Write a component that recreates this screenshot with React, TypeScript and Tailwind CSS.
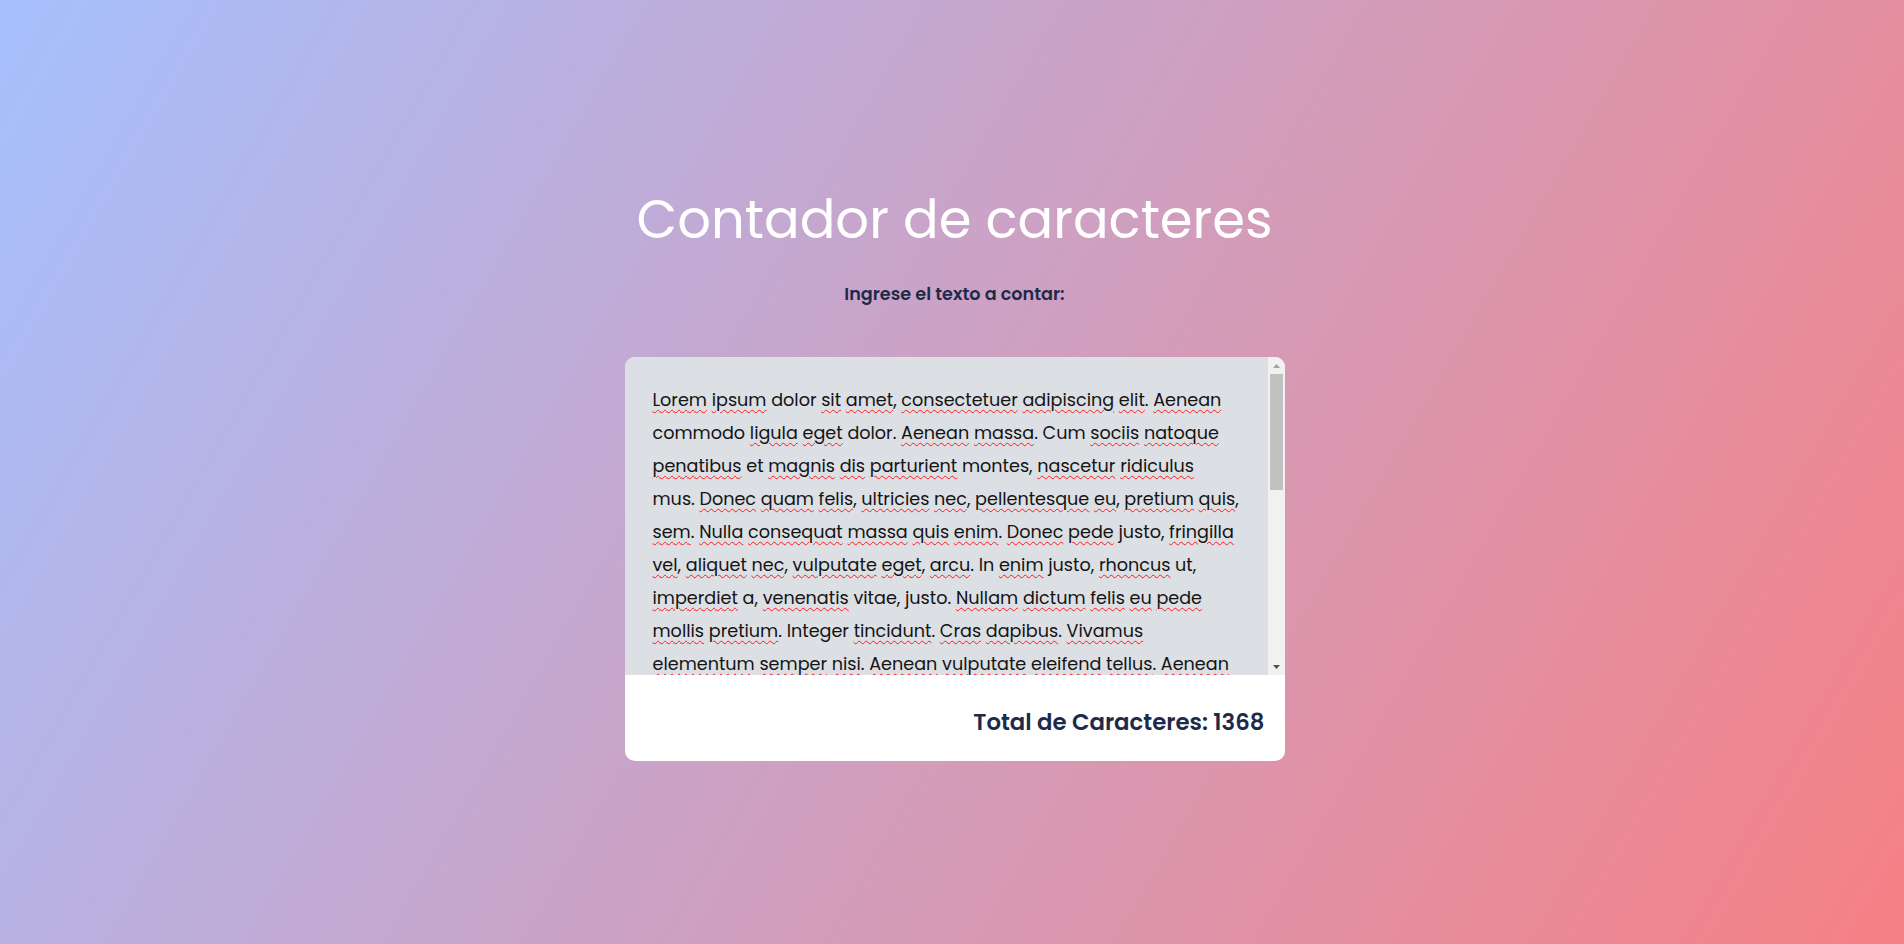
import React from "react";

const TEXT =
  "Lorem ipsum dolor sit amet, consectetuer adipiscing elit. Aenean commodo ligula eget dolor. Aenean massa. Cum sociis natoque penatibus et magnis dis parturient montes, nascetur ridiculus mus. Donec quam felis, ultricies nec, pellentesque eu, pretium quis, sem. Nulla consequat massa quis enim. Donec pede justo, fringilla vel, aliquet nec, vulputate eget, arcu. In enim justo, rhoncus ut, imperdiet a, venenatis vitae, justo. Nullam dictum felis eu pede mollis pretium. Integer tincidunt. Cras dapibus. Vivamus elementum semper nisi. Aenean vulputate eleifend tellus. Aenean leo ligula, porttitor eu, consequat vitae, eleifend ac, enim. Aliquam lorem ante, dapibus in, viverra quis, feugiat a, tellus. Phasellus viverra nulla ut metus varius laoreet. Quisque rutrum. Aenean imperdiet. Etiam ultricies nisi vel augue. Curabitur ullamcorper ultricies nisi. Nam eget dui. Etiam rhoncus. Maecenas tempus, tellus eget condimentum rhoncus, sem quam semper libero, sit amet adipiscing sem neque sed ipsum. Nam quam nunc, blandit vel, luctus pulvinar, hendrerit id, lorem. Maecenas nec odio et ante tincidunt tempus. Donec vitae sapien ut libero venenatis faucibus. Nullam quis ante. Etiam sit amet orci eget eros faucibus tincidunt. Duis leo. Sed fringilla mauris sit amet nibh. Donec sodales sagittis magna. Sed consequat, leo eget bibendum sodales, augue velit cursus nunc, quis gravida magna mi a libero. Fusce vulputate eleifend sapien. Vestibulum purus quam, scelerisque ut, mollis sed, nonummy id, metus. Nullam accumsan lorem in dui.";

// words the spell checker accepts
const KNOWN = new Set(["dolor", "commodo", "cum", "et", "montes", "mus", "justo", "in", "ut", "a", "vitae", "integer", "ante", "nam", "sed", "id", "duis", "magna", "sapien"]);

const Word: React.FC<{ raw: string }> = ({ raw }) => {
  const m = raw.match(/^([A-Za-z]+)(.*)$/);
  if (!m) return <>{raw}</>;
  const [, word, rest] = m;
  const bad = !KNOWN.has(word.toLowerCase());
  return (
    <>
      <span className={bad ? "underline decoration-wavy decoration-[#ff1a1a] decoration-[1.3px] underline-offset-[3px]" : ""}>{word}</span>
      {rest}
    </>
  );
};

const Scrollbar = () => (
  <div className="w-[17px] shrink-0 bg-[#f1f1f1] flex flex-col">
    <div className="h-[17px] flex items-center justify-center">
      <svg width="7" height="4" viewBox="0 0 7 4"><path d="M3.5 0L7 4H0z" fill="#a3a3a3" /></svg>
    </div>
    <div className="flex-1 px-[2px]">
      <div className="h-[116px] bg-[#c1c1c1]" />
    </div>
    <div className="h-[17px] flex items-center justify-center">
      <svg width="7" height="4" viewBox="0 0 7 4"><path d="M0 0H7L3.5 4z" fill="#505050" /></svg>
    </div>
  </div>
);

export default function App() {
  const words = TEXT.split(" ");

  return (
    <div className="min-h-screen w-full bg-[linear-gradient(120deg,#a6c0fe_0%,#f68084_100%)] flex flex-col items-center pt-[190px] pl-[5px] font-['Poppins','Inter',sans-serif]">
      <h1 className="text-[52.8px] leading-[60px] font-normal text-white">Contador de caracteres</h1>
      <p className="mt-8 text-[17.6px] leading-6 font-semibold text-[#1e2a4a]">Ingrese el texto a contar:</p>

      <div className="mt-[51px] w-[660px] bg-white rounded-[10px] overflow-hidden flex flex-col">
        {/* Textarea */}
        <div className="h-[318px] flex bg-[#dcdfe3] rounded-tl-[10px]">
          <div className="flex-1 overflow-hidden px-7 pt-[27px] text-[17.6px] leading-[33px] text-[#141414]">
            {words.map((w, i) => (
              <React.Fragment key={i}>
                <Word raw={w} />{" "}
              </React.Fragment>
            ))}
          </div>
          <Scrollbar />
        </div>

        {/* Total */}
        <div className="pt-[32px] pb-[24px] px-5 text-right">
          <span className="text-[22.8px] leading-[30px] font-semibold text-[#1e2a4a]">Total de Caracteres: 1368</span>
        </div>
      </div>
    </div>
  );
}
